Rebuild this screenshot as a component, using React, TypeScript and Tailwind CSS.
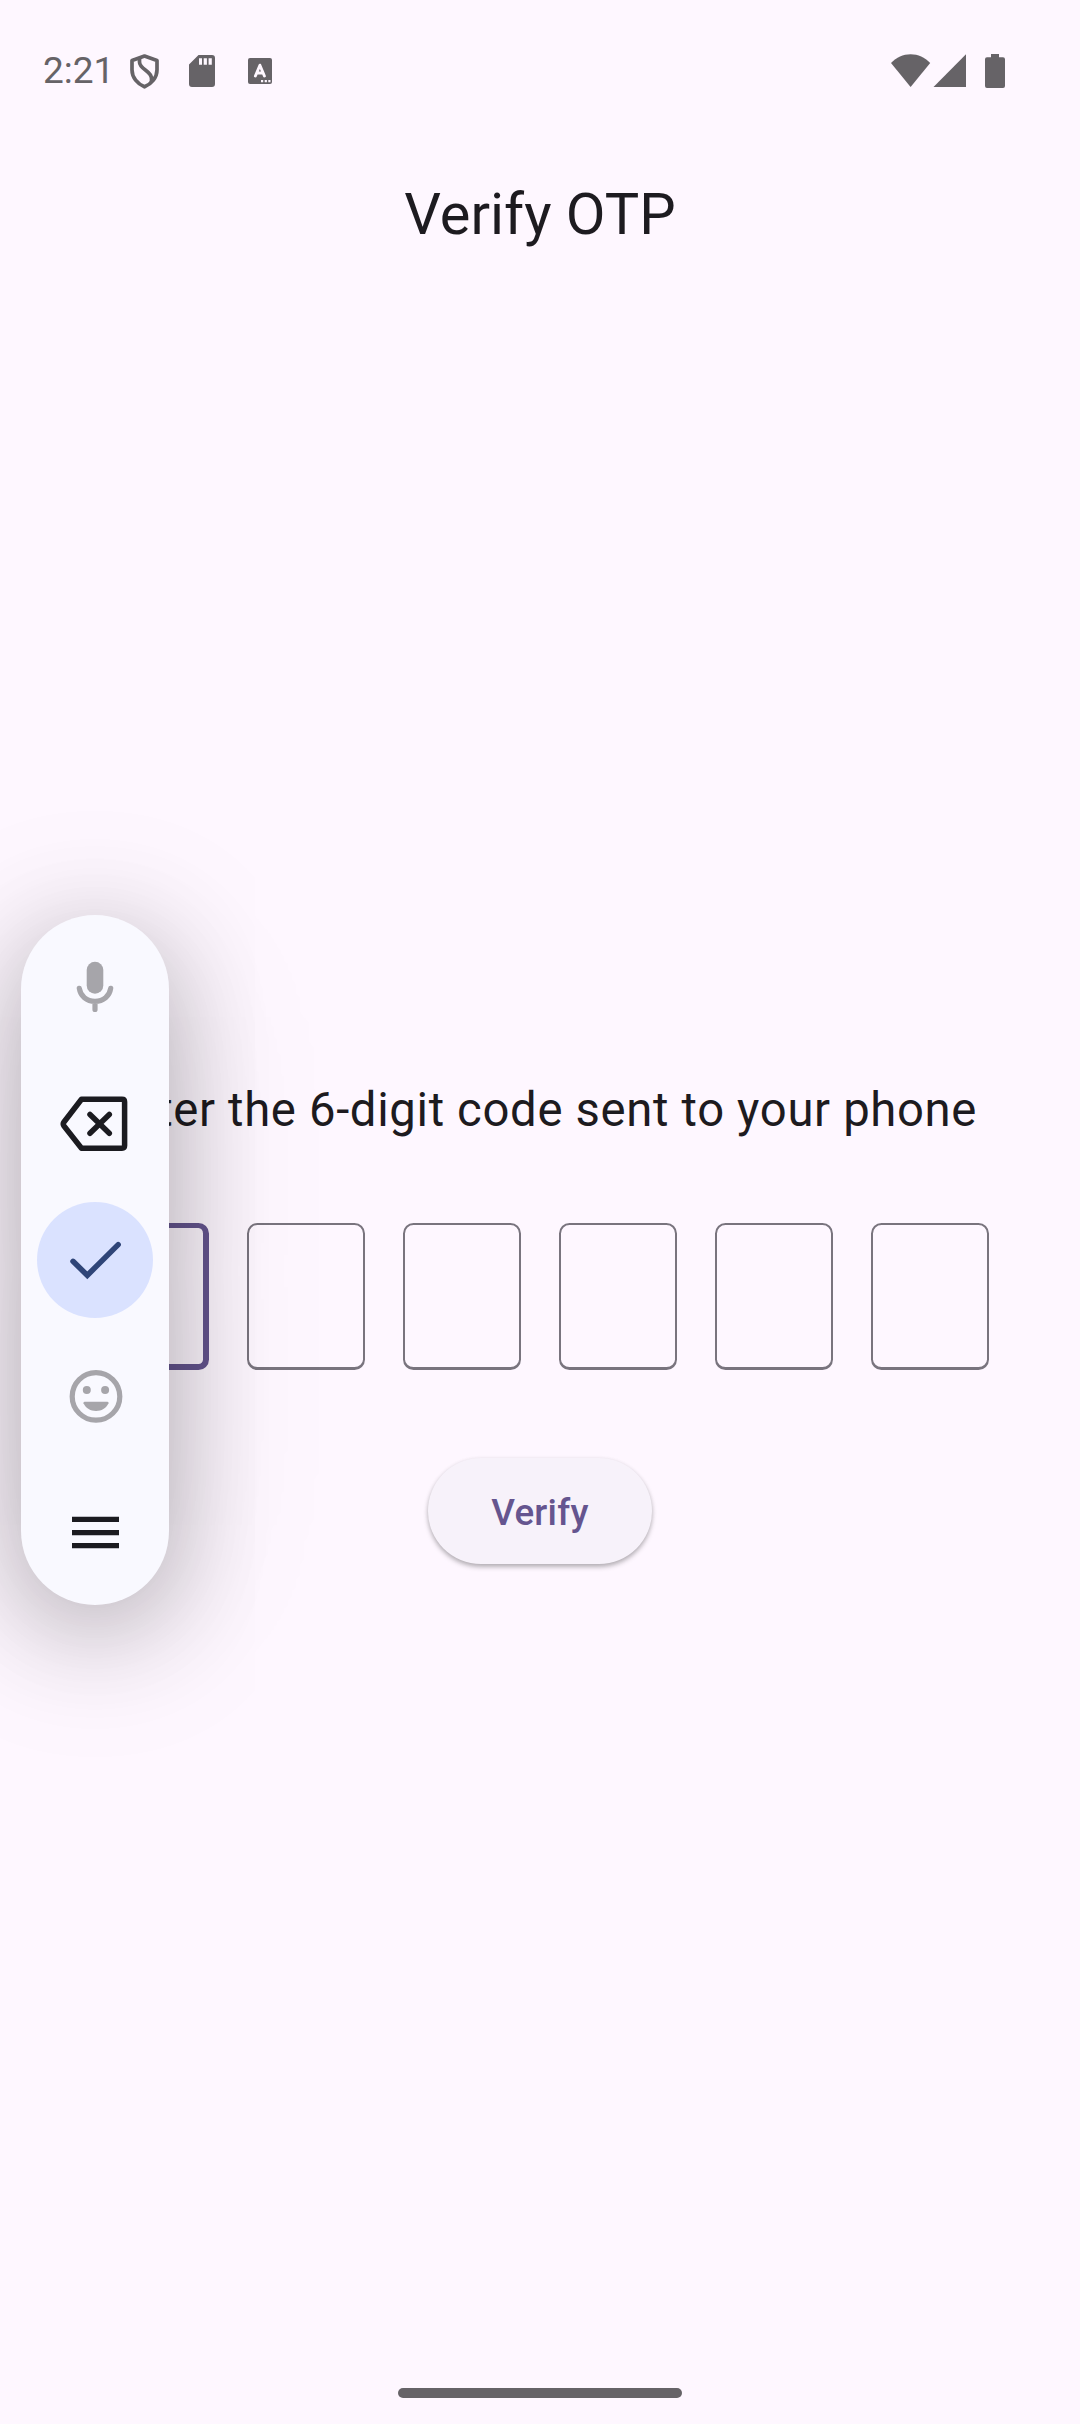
import React from "react";

const INK = "#666367";

function ShieldIcon() {
  return (
    <svg className="ml-[19px] mt-[54px] h-[35px] w-[30px] shrink-0" viewBox="0 0 30 35" fill="none" stroke={INK} strokeWidth="3.700">
      <path d="M14.5 2 L27 6.400 V16 C27 23.500 21.500 29.800 14.500 32.800 C7.500 29.800 2 23.500 2 16 V6.400 Z" strokeLinejoin="round" />
      <path d="M9.500 4 V8 C9.500 15.500 21.500 16.500 21.500 24.500 V28" />
    </svg>
  );
}

function SdIcon() {
  return (
    <svg className="ml-[29px] mt-[55px] h-[32px] w-[26px] shrink-0" viewBox="0 0 26 32" fill={INK}>
      <path fillRule="evenodd" d="M9.5 0 H23 Q26 0 26 3 V29 Q26 32 23 32 H3 Q0 32 0 29 V9.5 Z M10 3.2 V9.7 H13 V3.2 Z M14.7 3.2 V9.7 H17.9 V3.2 Z M19.6 3.2 V9.7 H22.8 V3.2 Z" />
    </svg>
  );
}

function LetterTile() {
  return (
    <svg className="ml-[33px] mt-[58px] h-[26px] w-[24px] shrink-0" viewBox="0 0 24 26">
      <rect width="24" height="26" rx="2" fill={INK} />
      <path d="M7.400 18 L11.900 7.200 L16.400 18 M9.500 15 H14.500" fill="none" stroke="#fef7ff" strokeWidth="2.900" strokeLinecap="round" strokeLinejoin="round" />
      <path d="M13 23.200 h2.200 M16.700 23.200 h2.200 M20.300 23.200 h2.200" stroke="#fef7ff" strokeWidth="2.200" />
    </svg>
  );
}

function StatusBar() {
  return (
    <header className="flex h-[136px] items-start">
      <span className="ml-[43px] mt-[49px] w-[68px] whitespace-nowrap text-[37px] leading-[44px] text-[#666367]">2:21</span>
      <ShieldIcon />
      <SdIcon />
      <LetterTile />
      <div className="ml-auto mr-[75px] mt-[54px] flex">
        <svg className="h-[34px] w-[40px]" viewBox="0 0 40 34" fill={INK}>
          <path d="M19.600 33 L0 9 C5.500 3 12 0.200 19.600 0.200 C27.200 0.200 33.700 3 39.200 9 Z" />
        </svg>
        <svg className="ml-[2px] h-[34px] w-[33px]" viewBox="0 0 33 34" fill={INK}>
          <path d="M0.500 33 L33 0.200 V33 Z" />
        </svg>
        <svg className="ml-[19px] h-[34px] w-[20px]" viewBox="0 0 20 34" fill={INK}>
          <path d="M6 0 H14 V3.300 H18 Q20 3.300 20 5.300 V32 Q20 34 18 34 H2 Q0 34 0 32 V5.300 Q0 3.300 2 3.300 H6 Z" />
        </svg>
      </div>
    </header>
  );
}

function FloatingToolbar() {
  return (
    <aside className="absolute left-[21px] top-[915px] flex h-[690px] w-[148px] flex-col items-center rounded-full bg-[#f9f9ff] shadow-[0_22px_100px_rgba(0,0,0,0.24),0_24px_170px_rgba(0,0,0,0.14)]">
      <svg className="mt-[41px] h-[63px] w-[64px] shrink-0" viewBox="63.500 956 64 63" fill="none" stroke="#a6a5aa" strokeWidth="5.200" strokeLinecap="round">
        <rect x="87.200" y="961.800" width="16.600" height="32" rx="8.300" fill="#a6a5aa" stroke="none" />
        <path d="M79.800 988.300 C81 996 87 1001.300 95.500 1001.300 C104 1001.300 110 996 111.200 988.300 M95.500 1002 V1009.500" />
      </svg>
      <svg className="mt-[63px] h-[84px] w-[84px] shrink-0" viewBox="53 1082 84 84" fill="none" stroke="#1b1b20" strokeWidth="5.500" strokeLinecap="round" strokeLinejoin="round">
        <path d="M81.500 1099.300 H122 Q124.600 1099.300 124.600 1102 V1145.500 Q124.600 1148.200 122 1148.200 H81.500 L64 1126 Q62.500 1124 64 1122 Z" />
        <path d="M90 1114.500 L109.300 1133.300 M109.300 1114.500 L90 1133.300" />
      </svg>
      <div className="mt-[36px] flex size-[116px] shrink-0 rounded-full bg-[#dae2ff]">
        <svg className="size-[116px]" viewBox="37 1202 116 116" fill="none" stroke="#2f4578" strokeWidth="5.500" strokeLinecap="round">
          <path d="M73 1261.300 L87.300 1275.300 L118.200 1244.600" />
        </svg>
      </div>
      <svg className="mt-[47px] h-[63px] w-[63px] shrink-0" viewBox="63.500 1365 63 63" fill="#a6a5aa">
        <circle cx="95.500" cy="1396.400" r="23.800" fill="none" stroke="#a6a5aa" strokeWidth="5.200" />
        <circle cx="86.300" cy="1390" r="4" />
        <circle cx="104.600" cy="1390" r="4" />
        <path d="M84 1401.800 H107 Q108.500 1402 108 1403.300 C105.500 1408.500 101 1411 95.500 1411 C90 1411 85.500 1408.500 83 1403.300 Q82.600 1402 84 1401.800 Z" />
      </svg>
      <svg className="mt-[73px] h-[63px] w-[63px] shrink-0" viewBox="64 1501 63 63" fill="#1b1b20">
        <path d="M72 1516.700 h47 v5.300 h-47 Z M72 1530 h47 v5.300 h-47 Z M72 1543 h47 v5.300 h-47 Z" />
      </svg>
    </aside>
  );
}

export default function App() {
  return (
    <div className="relative flex h-[2424px] w-[1080px] flex-col overflow-hidden bg-[#fef7ff] font-['Roboto',sans-serif] text-[#1d1b20]">
      <StatusBar />
      <h1 className="mt-[44px] text-center text-[57.75px] leading-[68px]">Verify OTP</h1>
      <main className="mt-[834px] flex flex-col items-center">
        <p className="whitespace-nowrap text-[47.25px] leading-[56px] tracking-[0.656px]">Enter the 6-digit code sent to your phone</p>
        <div className="mt-[85px] flex gap-[38.200px]">
          <div className="h-[147px] w-[118px] rounded-[10.5px] border-[5px] border-b-[6px] border-r-[6px] border-[#65558f]" />
          {[2, 3, 4, 5, 6].map((n) => (
            <div key={n} className="h-[147px] w-[118px] rounded-[10.5px] border-2 border-b-[3px] border-[#79747e]" />
          ))}
        </div>
        <button className="mt-[88px] h-[106px] w-[224px] rounded-full bg-[#f7f2fa] pt-[4px] text-[36.75px] font-medium tracking-[0.26px] text-[#65558f] shadow-[0_3px_5px_rgba(0,0,0,0.26),0_1px_4px_rgba(0,0,0,0.08)]">Verify</button>
      </main>
      <div className="mb-[26px] mt-auto h-[10px] w-[284px] self-center rounded-full bg-[#666367]" />
      <FloatingToolbar />
    </div>
  );
}
